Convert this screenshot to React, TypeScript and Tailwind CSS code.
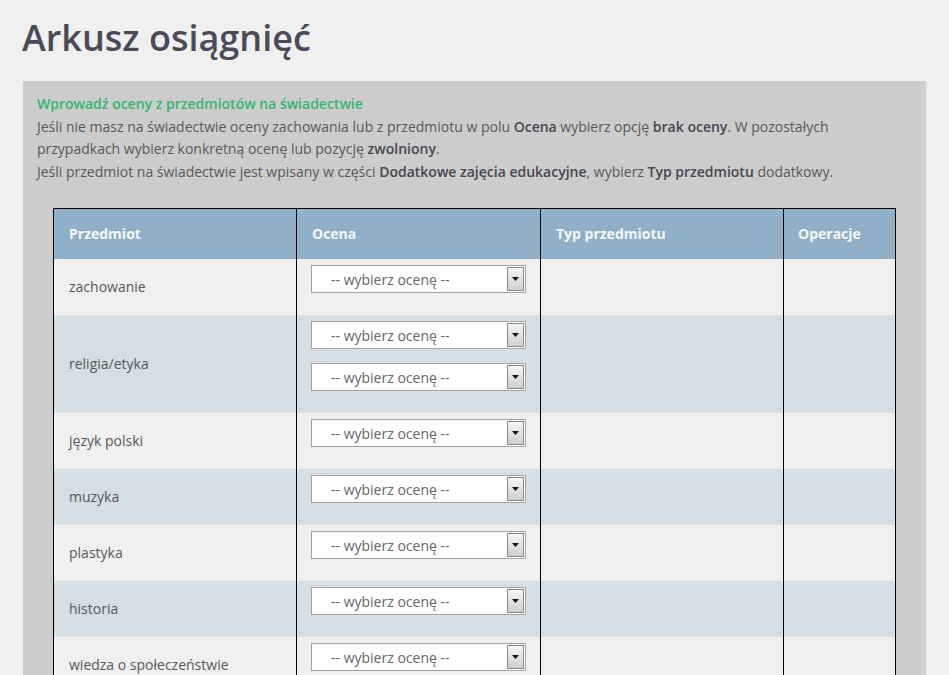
import React from 'react';

const subjects: { name: string; selects: number }[] = [
  { name: 'zachowanie', selects: 1 },
  { name: 'religia/etyka', selects: 2 },
  { name: 'język polski', selects: 1 },
  { name: 'muzyka', selects: 1 },
  { name: 'plastyka', selects: 1 },
  { name: 'historia', selects: 1 },
  { name: 'wiedza o społeczeństwie', selects: 1 },
  { name: 'geografia', selects: 1 },
];

const GradeSelect: React.FC = () => (
  <div className="relative flex h-[28px] w-[215px] items-center border border-[#a3a3a3] bg-white mb-[14px] last:mb-0">
    <span className="pl-[19px] text-[14px] text-[#666]">-- wybierz ocenę --</span>
    <div className="absolute right-0 top-0 bottom-0 m-px flex w-[17px] items-center justify-center border border-[#8a8a8a] bg-gradient-to-b from-[#f6f6f6] to-[#cfcfcf]">
      <svg width="7" height="4" viewBox="0 0 7 4">
        <path d="M0 0h7L3.5 4z" fill="#111" />
      </svg>
    </div>
  </div>
);

const App: React.FC = () => {
  return (
    <div className="min-h-screen bg-[#f0f0f0] font-['Open_Sans',sans-serif] text-[#595959]">
      <div className="px-[23px] pt-[12px]">
        <h1 className="text-[36px] font-semibold leading-[52px] text-[#4b4b57] mb-[17px] -ml-px">Arkusz osiągnięć</h1>
        <div className="bg-[#cccccc] border-r-[5px] border-[#d1d1d1] pl-[14px] pr-[9px] pt-[12px]">
          <div className="text-[14px] leading-[22.7px]">
            <div className="font-semibold text-[#34b66b]">Wprowadź oceny z przedmiotów na świadectwie</div>
            <div>
              Jeśli nie masz na świadectwie oceny zachowania lub z przedmiotu w polu <b className="font-semibold text-[#474752]">Ocena</b> wybierz opcję{' '}
              <b className="font-semibold text-[#474752]">brak oceny</b>. W pozostałych przypadkach wybierz konkretną ocenę lub pozycję{' '}
              <b className="font-semibold text-[#474752]">zwolniony</b>.
            </div>
            <div>
              Jeśli przedmiot na świadectwie jest wpisany w części <b className="font-semibold text-[#474752]">Dodatkowe zajęcia edukacyjne</b>, wybierz{' '}
              <b className="font-semibold text-[#474752]">Typ przedmiotu</b> dodatkowy.
            </div>
          </div>
          <div className="mx-[16px] mt-[24px]">
            <table className="w-full table-fixed border-collapse border border-black text-[14px]">
              <colgroup>
                <col className="w-[243px]" />
                <col className="w-[244px]" />
                <col className="w-[243px]" />
                <col />
              </colgroup>
              <thead>
                <tr className="h-[51px] bg-[#8fb0c8] text-left text-[#f7f7f7]">
                  <th className="border-r border-black px-[15px] pb-[2px] font-bold">Przedmiot</th>
                  <th className="border-r border-black px-[15px] pb-[2px] font-bold">Ocena</th>
                  <th className="border-r border-black px-[15px] pb-[2px] font-bold">Typ przedmiotu</th>
                  <th className="px-[14px] pb-[2px] font-bold">Operacje</th>
                </tr>
              </thead>
              <tbody>
                {subjects.map((s, i) => (
                  <tr key={s.name} className={i % 2 === 0 ? 'bg-[#f0f0f0]' : 'bg-[#d3dee5]'}>
                    <td className="border-r border-black px-[15px] pb-[1px] align-middle">{s.name}</td>
                    <td className="border-r border-black px-[14px] pt-[6px] pb-[8px] align-top">
                      <div className="flex flex-col pb-[14px]">
                        {Array.from({ length: s.selects }).map((_, k) => (
                          <GradeSelect key={k} />
                        ))}
                      </div>
                    </td>
                    <td className="border-r border-black"></td>
                    <td></td>
                  </tr>
                ))}
              </tbody>
            </table>
          </div>
        </div>
      </div>
    </div>
  );
};

export default App;
